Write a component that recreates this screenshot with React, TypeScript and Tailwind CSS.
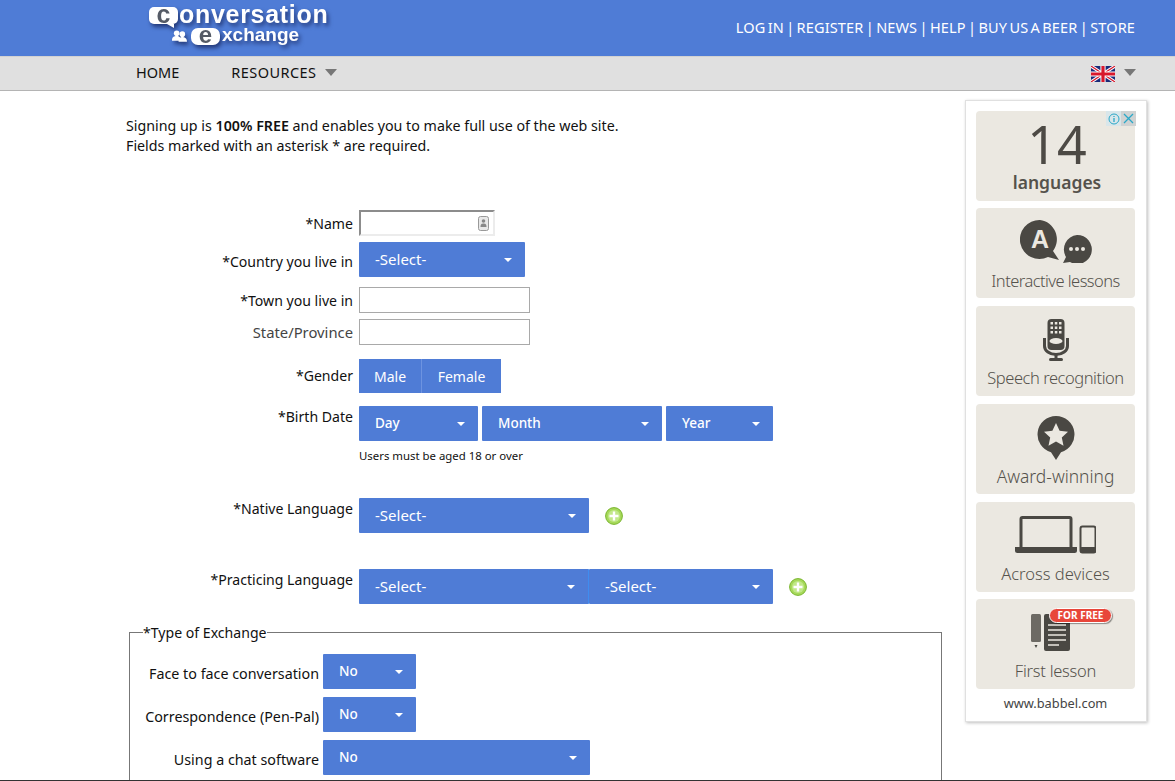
import type { ReactNode } from 'react';

const font = { fontFamily: '"Noto Sans", "Open Sans", sans-serif' };

function Caret({ className = 'border-t-white' }: { className?: string }) {
  return <span className={`block w-0 h-0 border-x-4 border-x-transparent border-t-[4px] ${className}`} />;
}

function Select({ label, className = '', bold = false }: { label: string; className?: string; bold?: boolean }) {
  return (
    <div className={`h-[35px] bg-[#4f7cd6] text-white flex items-center justify-between pl-4 pr-[13px] rounded-[1px] ${bold ? 'text-[13.5px]' : 'text-[15px]'} ${className}`}>
      <span className={bold ? 'font-medium' : ''}>{label}</span>
      <Caret />
    </div>
  );
}

function Row({ label, className = '', labelClass = '', children }: { label: string; className?: string; labelClass?: string; children: ReactNode }) {
  return (
    <div className={`flex ${className}`}>
      <div className={`w-[227px] text-right text-[#111] text-[14.1px] leading-5 shrink-0 mr-[6px] ${labelClass}`}>{label}</div>
      {children}
    </div>
  );
}

function PlusIcon() {
  return (
    <svg width="18" height="18" viewBox="0 0 18 18" className="shrink-0">
      <circle cx="9" cy="9" r="8.4" fill="#a6d95a" stroke="#7ab52f" />
      <circle cx="9" cy="9" r="6" fill="#c2e88a" />
      <path d="M9 4.500v9M4.500 9h9" stroke="#fff" strokeWidth="2.400" />
    </svg>
  );
}

function AdCard({ label, children, labelClass = 'text-[16.5px]', className = '' }: { label: string; children: ReactNode; labelClass?: string; className?: string }) {
  return (
    <div className={`h-[90px] w-[159px] bg-[#ebe8e1] rounded-[4px] flex flex-col items-center justify-end pb-[6px] relative ${className}`}>
      <div className="flex-1 flex items-center justify-center pt-[5px]">{children}</div>
      <div className={`text-[#55524c] leading-6 font-light whitespace-nowrap ${labelClass}`}>{label}</div>
    </div>
  );
}

function FlagUk() {
  return (
    <svg width="24" height="16" viewBox="0 0 60 40">
      <rect width="60" height="40" fill="#1a2a78" />
      <path d="M0 0L60 40M60 0L0 40" stroke="#fff" strokeWidth="8" />
      <path d="M0 0L60 40M60 0L0 40" stroke="#d8182c" strokeWidth="3" />
      <path d="M30 0v40M0 20h60" stroke="#fff" strokeWidth="13" />
      <path d="M30 0v40M0 20h60" stroke="#d8182c" strokeWidth="8" />
    </svg>
  );
}

function Logo() {
  return (
    <div className="relative w-[190px] h-[56px] font-bold text-white [filter:drop-shadow(2px_3px_2px_rgba(20,35,90,0.75))]" style={{ fontFamily: '"Liberation Sans", Arial, sans-serif' }}>
      <div className="absolute left-[2px] top-[7px] w-[29px] h-[17px] bg-white rounded-[5px] text-[#555b66] text-[25px] leading-[14px] text-center">c</div>
      <svg className="absolute left-[20px] top-[24px]" width="8" height="4" viewBox="0 0 8 4"><path d="M0 0h7v4z" fill="#fff" /></svg>
      <div className="absolute left-[32px] top-[-1px] text-[25px] leading-[30px] tracking-[0.7px]">onversation</div>
      <svg className="absolute left-[25px] top-[29px]" width="15" height="14" viewBox="0 0 16 14" fill="#fff">
        <circle cx="5" cy="4" r="3" /><circle cx="11" cy="5" r="3" />
        <path d="M0 12c0-4 2-5 5-5s4 1 4 5zM7 13c0-4 2-5 4-5s5 1 5 5z" />
      </svg>
      <div className="absolute left-[44px] top-[28px] w-[29px] h-[17px] bg-white rounded-[7px] text-[#555b66] text-[24px] leading-[14px] text-center">e</div>
      <div className="absolute left-[75px] top-[24px] text-[19px] leading-[22px]">xchange</div>
    </div>
  );
}

export default function App() {
  return (
    <div className="h-[781px] overflow-hidden bg-white flex flex-col" style={font}>
      <header className="h-[56px] bg-[#4f7cd6] flex justify-between shrink-0">
        <div className="ml-[147px]"><Logo /></div>
        <nav className="mr-[40px] pt-[17px] text-white text-[14.5px] leading-5 [word-spacing:-1.6px] tracking-[0.14px]">
          LOG IN | REGISTER | NEWS | HELP | BUY US A BEER | STORE
        </nav>
      </header>
      <div className="h-[35px] bg-[#e0e0e0] border-t border-b border-t-[#d2d2d2] border-b-[#b4b4b4] flex items-center text-[14.5px] text-[#111] shrink-0">
        <span className="ml-[136px] -mt-[2px]">HOME</span>
        <span className="ml-[52px] -mt-[2px] tracking-[0.45px]">RESOURCES</span>
        <span className="ml-[8px] -mt-[2px]"><span className="block w-0 h-0 border-x-[6px] border-x-transparent border-t-[7px] border-t-[#777]" /></span>
        <span className="ml-auto"><FlagUk /></span>
        <span className="ml-[9px] mr-[39px] -mt-[2px]"><span className="block w-0 h-0 border-x-[6px] border-x-transparent border-t-[7px] border-t-[#777]" /></span>
      </div>

      <main className="flex-1 min-h-0 flex overflow-hidden">
        <div className="w-[965px] shrink-0 pl-[126px]">
          <p className="mt-[25px] text-[14.25px] leading-5 text-[#111]">
            Signing up is <b className="font-semibold">100% FREE</b> and enables you to make full use of the web site.
            <br />
            Fields marked with an asterisk * are required.
          </p>

          <div className="mt-[54px]">
            <Row label="*Name" labelClass="pt-[4px]">
              <div className="w-[136px] h-[26px] border-2 border-[#ececec] border-t-[#8c8c8c] border-l-[#8c8c8c] flex items-center justify-end pr-[4px]">
                <svg width="11" height="15" viewBox="0 0 11 15">
                  <rect x="0.5" y="0.5" width="10" height="14" rx="2" fill="#e8e8e8" stroke="#999" />
                  <circle cx="5.500" cy="5" r="1.800" fill="#888" />
                  <path d="M2.500 11c0-3 1.200-3.500 3-3.500s3 .5 3 3.500z" fill="#888" />
                </svg>
              </div>
            </Row>
            <Row label="*Country you live in" className="mt-[6px]" labelClass="pt-[10px]">
              <Select label="-Select-" className="w-[166px]" />
            </Row>
            <Row label="*Town you live in" className="mt-[10px]" labelClass="pt-[4px]">
              <div className="w-[171px] h-[26px] border border-[#a9a9a9]" />
            </Row>
            <Row label="State/Province" className="mt-[6px]" labelClass="pt-[3px] text-[#444] text-[14.8px]">
              <div className="w-[171px] h-[26px] border border-[#a9a9a9]" />
            </Row>
            <Row label="*Gender" className="mt-[14px]" labelClass="pt-[7px]">
              <div className="h-[34px] flex bg-[#4f7cd6] text-white text-[14px] leading-[35px]">
                <span className="w-[63px] text-center border-r border-r-[#6d93e0]">Male</span>
                <span className="w-[79px] text-center">Female</span>
              </div>
            </Row>
            <Row label="*Birth Date" className="mt-[13px]" labelClass="pt-[1px]">
              <div>
                <div className="flex gap-[4px]">
                  <Select label="Day" className="w-[119px]" bold />
                  <Select label="Month" className="w-[180px]" bold />
                  <Select label="Year" className="w-[107px]" bold />
                </div>
                <p className="mt-[7px] text-[11.4px] leading-4 text-[#111]">Users must be aged 18 or over</p>
              </div>
            </Row>
            <Row label="*Native Language" className="mt-[34px]" labelClass="pt-[1px]">
              <Select label="-Select-" className="w-[230px]" />
              <div className="ml-[16px] flex items-center"><PlusIcon /></div>
            </Row>
            <Row label="*Practicing Language" className="mt-[36px]" labelClass="pt-[1px]">
              <Select label="-Select-" className="w-[230px] border-r border-r-[#3f8cf0]" />
              <Select label="-Select-" className="w-[184px]" />
              <div className="ml-[16px] flex items-center"><PlusIcon /></div>
            </Row>
          </div>

          <fieldset className="mt-[17px] ml-[3px] w-[813px] border border-[#777] pl-[13px] h-[171px]">
            <legend className="text-[14.1px] leading-5 pt-[2px] text-[#111]">*Type of Exchange</legend>
            <div className="flex flex-col gap-2 -ml-[13px] mt-[11px]">
              <div className="flex">
                <div className="w-[189px] text-right text-[14.3px] text-[#111] pt-[10px] leading-5 mr-[4px]">Face to face conversation</div>
                <Select label="No" className="w-[93px]" bold />
              </div>
              <div className="flex">
                <div className="w-[189px] text-right text-[14.3px] text-[#111] pt-[10px] leading-5 mr-[4px]">Correspondence (Pen-Pal)</div>
                <Select label="No" className="w-[93px]" bold />
              </div>
              <div className="flex">
                <div className="w-[189px] text-right text-[14.3px] text-[#111] pt-[10px] leading-5 mr-[4px]">Using a chat software</div>
                <Select label="No" className="w-[267px]" bold />
              </div>
            </div>
          </fieldset>
        </div>

        <aside className="mt-[9px] w-[182px] h-[622px] bg-white border border-[#e0e0e0] shadow-[1px_1px_3px_rgba(0,0,0,0.25)] pl-[10px] pt-[10px] flex flex-col gap-[8px] relative">
          <div className="absolute right-[10px] top-[10px] flex text-[#2aa8c8]">
            <span className="w-[15px] h-[15px] bg-[#d9e6ea] flex items-center justify-center">
              <svg width="12" height="12" viewBox="0 0 12 12" fill="none" stroke="#2aa8c8"><circle cx="6" cy="6" r="5" /><path d="M6 5v4M6 3v1" strokeWidth="1.300" /></svg>
            </span>
            <span className="w-[15px] h-[15px] bg-[#cfd2d2] flex items-center justify-center">
              <svg width="11" height="11" viewBox="0 0 11 11" stroke="#2aa8c8" strokeWidth="1.300"><path d="M1 1l9 9M10 1l-9 9" /></svg>
            </span>
          </div>
          <div className="h-[90px] w-[159px] bg-[#ebe8e1] rounded-[4px] flex flex-col items-center text-[#4d4a45]">
            <div className="text-[52px] leading-[54px] mt-[6px] ml-[3px]">14</div>
            <div className="text-[17.5px] leading-6 font-semibold -mt-[1px] text-[#55524c] ml-[3px]">languages</div>
          </div>
          <AdCard label="Interactive lessons" labelClass="text-[16.5px] tracking-[-0.55px] translate-y-px" className="-mt-[1px]">
            <svg width="72" height="44" viewBox="0 0 72 44">
              <path d="M20 1a19.500 19.500 0 1 0 8 37l11 3-6-9A19.500 19.500 0 0 0 20 1z" fill="#4a4843" />
              <text x="20" y="29" textAnchor="middle" fontSize="25" fontWeight="700" fill="#ebe8e1" fontFamily="Liberation Sans, sans-serif">A</text>
              <path d="M57 16a14.500 14.500 0 1 1-7 27l-7 1 3-6a14.500 14.500 0 0 1 11-22z" fill="#4a4843" />
              <circle cx="51" cy="30" r="2" fill="#ebe8e1" /><circle cx="57" cy="30" r="2" fill="#ebe8e1" /><circle cx="63" cy="30" r="2" fill="#ebe8e1" />
            </svg>
          </AdCard>
          <AdCard label="Speech recognition" labelClass="text-[16.5px] tracking-[-0.45px]">
            <svg width="26" height="42" viewBox="0 0 26 42" className="mt-[3px]">
              <rect x="4.500" y="0" width="17" height="31" rx="4" fill="#4a4843" />
              <g fill="#ebe8e1">
                <rect x="7.500" y="3" width="2.500" height="2.500" /><rect x="11.800" y="3" width="2.500" height="2.500" /><rect x="16" y="3" width="2.500" height="2.500" />
                <rect x="7.500" y="7.500" width="2.500" height="2.500" /><rect x="11.800" y="7.500" width="2.500" height="2.500" /><rect x="16" y="7.500" width="2.500" height="2.500" />
                <rect x="7.500" y="12" width="2.500" height="2.500" /><rect x="11.800" y="12" width="2.500" height="2.500" /><rect x="16" y="12" width="2.500" height="2.500" />
                <ellipse cx="13" cy="22" rx="6.500" ry="3" />
              </g>
              <path d="M1.500 19v8a11.500 8.500 0 0 0 23 0v-8" fill="none" stroke="#4a4843" strokeWidth="3" />
              <rect x="11.500" y="34" width="3" height="6" fill="#4a4843" />
              <rect x="6" y="39" width="14" height="3" rx="1.500" fill="#4a4843" />
            </svg>
          </AdCard>
          <AdCard label="Award-winning" labelClass="text-[17.4px]">
            <svg width="38" height="44" viewBox="0 0 38 44" className="mt-[3px]">
              <path d="M19 0a18.500 18.500 0 0 0-5 36.300L19 44l5-7.700A18.500 18.500 0 0 0 19 0z" fill="#4a4843" />
              <path d="M19 7l3.600 7.800 8.400 1-6.200 5.700 1.700 8.300-7.500-4.200-7.500 4.200 1.700-8.300L7 15.800l8.400-1z" fill="#ebe8e1" />
            </svg>
          </AdCard>
          <AdCard label="Across devices">
            <svg width="82" height="38" viewBox="0 0 82 38" className="-ml-[2px]">
              <rect x="7" y="1.500" width="50" height="31" rx="1.500" fill="none" stroke="#4a4843" strokeWidth="3" />
              <path d="M1 31h62v3.500a2.500 2.500 0 0 1-2.500 2.500h-57A2.500 2.500 0 0 1 1 34.500z" fill="#4a4843" />
              <rect x="66.500" y="10.500" width="15" height="26" rx="2" fill="none" stroke="#4a4843" strokeWidth="2" />
              <rect x="66.500" y="31" width="15" height="6" rx="1" fill="#4a4843" />
            </svg>
          </AdCard>
          <AdCard label="First lesson" labelClass="text-[16.5px] tracking-[-0.25px]" className="-mt-[1px]">
            <svg width="40" height="38" viewBox="0 0 40 38" className="-ml-[10px]">
              <rect x="0" y="1" width="10" height="28" rx="1.500" fill="#6d6a64" />
              <path d="M3.500 32h3l-1.500 3z" fill="#4a4843" />
              <rect x="13" y="1" width="26" height="37" rx="2" fill="#4a4843" />
              <path d="M17 12h18M17 17h18M17 22h18M17 27h18M17 32h11" stroke="#ebe8e1" strokeWidth="1.500" />
            </svg>
            <span className="absolute left-[73px] top-[9px] h-[15px] w-[63px] rounded-full bg-[#e8463a] border border-white text-white text-[10px] font-bold leading-[13px] text-center shadow-[1px_1px_1px_rgba(0,0,0,0.4)]">FOR FREE</span>
          </AdCard>
          <div className="w-[159px] text-center text-[12.8px] leading-4 text-[#444] -mt-[2px]">www.babbel.com</div>
        </aside>
      </main>
      <div className="h-px bg-[#333] shrink-0" />
    </div>
  );
}
